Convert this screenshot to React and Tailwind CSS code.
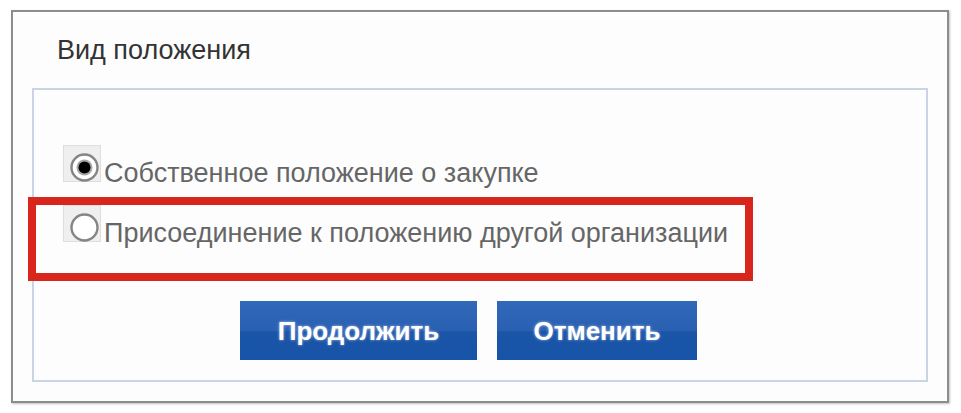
import React, { useState } from 'react';

const options = [
  { id: 'own', label: 'Собственное положение о закупке' },
  { id: 'join', label: 'Присоединение к положению другой организации' },
];

// Radio in a grey square, like the old IE-style control
const Radio = ({ checked }) => (
  <div className="w-[38px] h-[37px] shrink-0 bg-[#efefef] border border-[#dedede] pt-[7px] pl-[6px]">
    <svg width="29" height="29" viewBox="0 0 29 29">
      <circle cx="14.5" cy="14.5" r="13" fill="#fff" stroke="#858585" strokeWidth="2.4" />
      {checked && (
        <>
          <circle cx="14.5" cy="14.5" r="8" fill="#a8a8a8" />
          <circle cx="14.5" cy="14.5" r="6" fill="#000" />
        </>
      )}
    </svg>
  </div>
);

const Button = ({ children, width }) => (
  <button
    className={`${width} h-[59px] text-white font-bold text-[26px] leading-none bg-[linear-gradient(to_bottom,#3068ba_0%,#2a60b2_50%,#1a55a8_52%,#1753a6_100%)] [text-shadow:0_0_3px_rgba(255,255,255,0.6)]`}
  >
    {children}
  </button>
);

const App = () => {
  const [selected, setSelected] = useState('own');

  return (
    <div className="w-[961px] h-[413px] bg-white pt-[10px] pl-[11px] font-['Liberation_Sans',Arial,sans-serif]">
      <div className="relative w-[938px] h-[393px] border-2 border-[#8c8c8c] bg-[#fdfdfd] pt-[25px] px-[19px] shadow-[1px_1px_2px_rgba(0,0,0,0.25)]">
        <div className="pl-[25px] text-[27px] leading-none text-[#333]">Вид положения</div>

        <div className="mt-[24px] h-[294px] border-2 border-[#c9d5e7] pt-[55px] pl-[29px]">
          <div className="flex flex-col gap-[23px]">
            {options.map((o) => (
              <label
                key={o.id}
                className="flex items-start h-[37px] cursor-pointer"
                onClick={() => setSelected(o.id)}
              >
                <Radio checked={selected === o.id} />
                <span className="mt-[15px] ml-[3px] text-[27px] leading-none text-[#666] whitespace-nowrap">{o.label}</span>
              </label>
            ))}
          </div>

          <div className="flex gap-[20px] mt-[59px] pl-[177px]">
            <Button width="w-[237px]">Продолжить</Button>
            <Button width="w-[200px]">Отменить</Button>
          </div>
        </div>

        {/* annotation frame */}
        <div className="absolute left-[15px] top-[185px] w-[725px] h-[84px] border-[8px] border-[#d9261c]" />
      </div>
    </div>
  );
};

export default App;
